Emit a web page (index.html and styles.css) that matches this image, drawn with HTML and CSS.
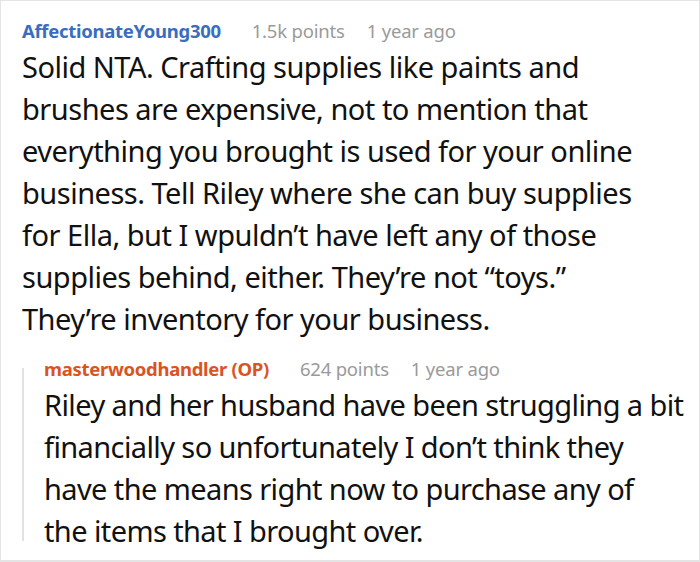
FILE: index.html
```html
<!DOCTYPE html>
<html>
<head>
<meta charset="utf-8">
<link rel="stylesheet" href="styles.css">
</head>
<body>
<div class="frame">
  <div class="comment">
    <div class="meta">
      <span class="user user-blue">AffectionateYoung300</span>
      <span class="info points">1.5k points</span>
      <span class="info time">1 year ago</span>
    </div>
    <p class="text">Solid NTA. Crafting supplies like paints and<br>brushes are expensive, not to mention that<br>everything you brought is used for your online<br>business. Tell Riley where she can buy supplies<br>for Ella, but I wpuldn’t have left any of those<br>supplies behind, either. They’re not “toys.”<br>They’re inventory for your business.</p>
  </div>
  <div class="reply">
    <div class="rail"></div>
    <div class="comment reply-body">
      <div class="meta">
        <span class="user user-orange">masterwoodhandler (OP)</span>
        <span class="info points">624 points</span>
        <span class="info time">1 year ago</span>
      </div>
      <p class="text">Riley and her husband have been struggling a bit<br>financially so unfortunately I don’t think they<br>have the means right now to purchase any of<br>the items that I brought over.</p>
    </div>
  </div>
</div>
</body>
</html>
```

FILE: styles.css
```css
html, body {
  margin: 0;
  padding: 0;
  background: #ffffff;
}

.frame {
  box-sizing: border-box;
  width: 700px;
  height: 562px;
  border: 1px solid #e4e4e4;
  border-bottom-width: 2px;
  font-family: "Noto Sans", "Open Sans", sans-serif;
  color: #111111;
  overflow: hidden;
  padding: 16px 0 0 21px;
}

.meta {
  display: flex;
  align-items: baseline;
  height: 27px;
  line-height: 27px;
  font-size: 18.5px;
  white-space: nowrap;
}

.user {
  font-weight: 700;
  letter-spacing: -0.3px;
}

.user-blue {
  color: #3a6dbf;
}

.user-orange {
  color: #d9541f;
}

.info {
  color: #9a9a9a;
  letter-spacing: -0.2px;
}

.points {
  margin-left: 31px;
}

.time {
  margin-left: 22px;
}

.text {
  margin: 2px 0 0 0;
  font-size: 29px;
  line-height: 42px;
  letter-spacing: -0.5px;
  white-space: nowrap;
  font-feature-settings: "ss03";
}

.reply-body .text {
  letter-spacing: -0.6px;
}

.reply {
  display: flex;
  margin-top: 15px;
}

.rail {
  width: 2px;
  background: #e2e2e2;
  margin-top: 13px;
  margin-bottom: 11px;
  flex: none;
}

.reply-body {
  margin-left: 20px;
}
```
